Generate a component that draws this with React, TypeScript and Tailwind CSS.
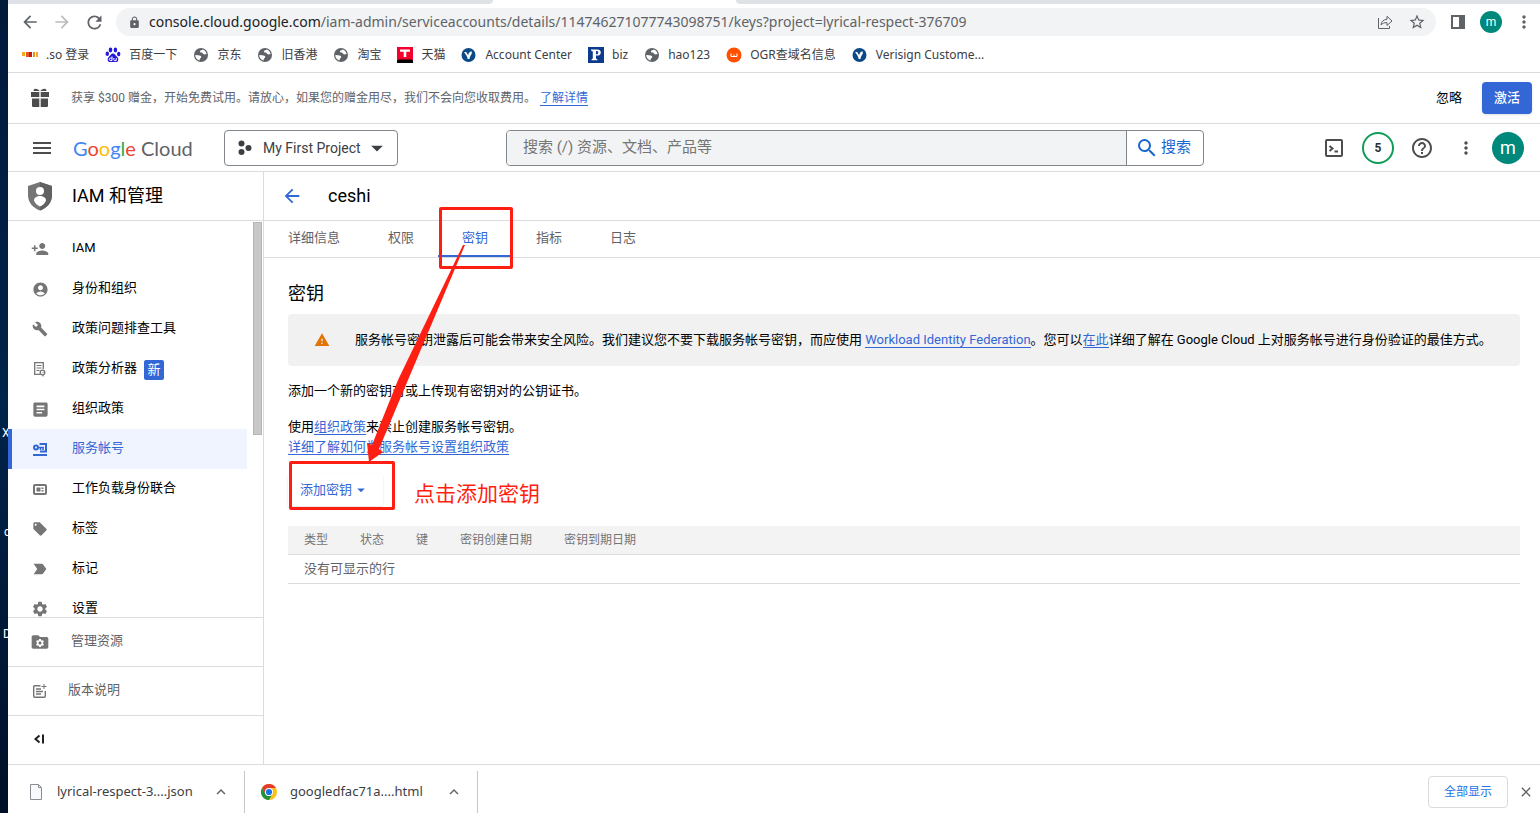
import type { ReactNode } from "react";
import {
  MdAccountCircle,
  MdArrowBack,
  MdArrowDropDown,
  MdArrowForward,
  MdArticle,
  MdBuild,
  MdClose,
  MdFolder,
  MdHelpOutline,
  MdKeyboardArrowUp,
  MdLabelImportant,
  MdLocalOffer,
  MdLock,
  MdMenu,
  MdMoreVert,
  MdPersonAdd,
  MdRefresh,
  MdSearch,
  MdSettings,
  MdStarOutline,
  MdWarning,
} from "react-icons/md";

function GlobeIcon() {
  return (
    <svg width="16" height="16" viewBox="0 0 16 16">
      <circle cx="8" cy="8" r="7" fill="#5f6368" />
      <path
        d="M2.300 8C4 7.800 5.200 8.400 6.500 8.500c1.300.1 2 .9 1.600 1.900-.4.900-1.300.8-1.400 1.700l-.1 1.500C4 13 2.200 10.700 2.300 8zM9.500 2.500c-.2.900-2 .6-2.500 1.600-.5 1.200.6 1.500 1.700 1.500 1.200 0 .9 1.300 2 1.700 1 .3 2 .1 2.900-.3-.4-2.300-2-4-4.100-4.500z"
        fill="#fff"
      />
    </svg>
  );
}

function SoIcon() {
  return (
    <svg width="16" height="16" viewBox="0 0 16 16">
      <rect x="0" y="5" width="3" height="4" fill="#f5a623" />
      <rect x="4" y="5" width="3" height="5" fill="#e2581d" />
      <rect x="7" y="5" width="3" height="5" fill="#c21a1a" />
      <rect x="11" y="5" width="2" height="5" fill="#f08a1d" />
      <rect x="14" y="5" width="2" height="5" fill="#f5a623" />
    </svg>
  );
}

function PawIcon() {
  return (
    <svg width="16" height="16" viewBox="0 0 16 16" fill="#2319dc">
      <ellipse cx="5.500" cy="3" rx="1.800" ry="2.400" />
      <ellipse cx="10.400" cy="3" rx="1.800" ry="2.400" />
      <ellipse cx="2.300" cy="6.800" rx="1.700" ry="2.200" />
      <ellipse cx="13.700" cy="7" rx="1.700" ry="2.200" />
      <path d="M8 6.500c2 0 2.600 2 4 3.200 2 1.700 1.700 5.300-1 5.300H5c-2.700 0-3-3.600-1-5.300C5.400 8.500 6 6.500 8 6.500z" />
      <path d="M7 9.500v4H5.200c-1.200 0-1.200-2.400 0-2.400H7M8.800 11v1.700c0 .8.500.9 1 .9h1.400V11" fill="none" stroke="#fff" />
    </svg>
  );
}

function TmallIcon() {
  return (
    <svg width="16" height="16" viewBox="0 0 16 16">
      <rect width="16" height="16" fill="#f5002d" />
      <path d="M3 2.500h10v2.200H9.300V10H6.700V4.700H3z" fill="#fff" />
      <path d="M0 16v-2.500C1.500 12 3 12.600 4.500 12.600h7c1.500 0 3-.6 4.500.9V16z" fill="#000" />
    </svg>
  );
}

function VerisignIcon() {
  return (
    <svg width="16" height="16" viewBox="0 0 16 16">
      <circle cx="7.500" cy="8" r="7" fill="#0b4a86" />
      <path d="M3 5.500l2-.8 2.200 3.600c.2-1.600 1-3.500 3.600-4-.6.8.4 1.500 0 2.300C10 8 8.700 9.800 8.500 12H6.600c0-2-1.800-5-3.600-6.500z" fill="#fff" />
    </svg>
  );
}

function BizIcon() {
  return (
    <svg width="16" height="16" viewBox="0 0 16 16">
      <rect width="16" height="16" fill="#0c3a8c" />
      <path d="M3 2.500h6.500c2 0 3.300 1 3.300 2.900S11.500 8.600 9.500 8.600H8v3l1.400.8v.8H3.500v-.8l1.300-.8v-7L3 3.500zM8 4v3.300h1c1.600 0 1.600-3.300 0-3.300z" fill="#fff" fillRule="evenodd" />
    </svg>
  );
}

function OgrIcon() {
  return (
    <svg width="16" height="16" viewBox="0 0 16 16">
      <circle cx="8" cy="8" r="7.500" fill="#fe5000" />
      <path d="M5 6.500v3h6v-3M8 7.500v2" fill="none" stroke="#fff" />
    </svg>
  );
}

function ChromeIcon() {
  return (
    <svg width="16" height="16" viewBox="0 0 16 16">
      <circle cx="8" cy="8" r="8" fill="#fbc116" />
      <path d="M8 0a8 8 0 0 1 6.930 4H8a4 4 0 0 0-3.460 6L1.070 4A8 8 0 0 1 8 0z" fill="#e33b2e" />
      <path d="M1.070 4l3.470 6A4 4 0 0 0 11.460 10L8 16A8 8 0 0 1 1.070 4z" fill="#229342" />
      <circle cx="8" cy="8" r="4" fill="#fff" />
      <circle cx="8" cy="8" r="3.100" fill="#1a73e8" />
    </svg>
  );
}

function FileIcon() {
  return (
    <svg width="16" height="18" viewBox="0 0 16 18">
      <path d="M2.500 1.500h8l3 3v12h-11z" fill="#f8f9fa" stroke="#8a8d91" />
      <path d="M10.500 1.500v3h3" fill="none" stroke="#8a8d91" />
    </svg>
  );
}

function GiftIcon() {
  return (
    <svg width="20" height="20" viewBox="0 0 20 20" fill="#4d4d4d">
      <path d="M10 3.500C8.500.5 5 .2 4 1.200L3.500 3H10zM10 3.500C11.500.5 15 .2 16 1.200l.5 1.800H10z" />
      <path d="M1 4h8.300v5H1zM10.700 4H19v5h-8.300zM2 10.500h7.300V19H3a1 1 0 0 1-1-1zM10.700 10.500H18V18a1 1 0 0 1-1 1h-6.300z" />
    </svg>
  );
}

function ShareIcon() {
  return (
    <svg width="18" height="18" viewBox="0 0 18 18" fill="none" stroke="#5f6368">
      <path d="M2.500 5v10.500h11V13" />
      <path d="M5 12c.4-3.600 2.600-5.500 6-5.700V3.300L16 8l-5 4.500V9.600C8.300 9.500 6.500 10.300 5 12z" />
    </svg>
  );
}

function SidePanelIcon() {
  return (
    <svg width="16" height="16" viewBox="0 0 16 16">
      <path d="M1 1h14v14H1zM3 3v10h6V3z" fill="#5f6368" fillRule="evenodd" />
    </svg>
  );
}

function ShieldIcon() {
  return (
    <svg width="26" height="30" viewBox="0 0 26 30">
      <path d="M13 1l12 4v9c0 7.500-5 13-12 15.500C6 27 1 21.500 1 14V5z" fill="#757575" />
      <path d="M13 1l12 4v9c0 7.500-5 13-12 15.500z" fill="#616161" />
      <circle cx="13" cy="10" r="4" fill="#fff" />
      <path d="M7 19.500c0-3 3-4.500 6-4.500s6 1.500 6 4.500c-1 3-3.400 5-6 6-2.600-1-5-3-6-6z" fill="#fff" />
    </svg>
  );
}

function PolicyAnalyzerIcon() {
  return (
    <svg width="16" height="16" viewBox="0 0 16 16" fill="none" stroke="#757575">
      <path d="M8 13.300H2.700V1.700h8.600V8" strokeWidth="1.300" />
      <path d="M4.500 4.500h5M4.500 7h5M4.500 9.500h3" />
      <circle cx="10.500" cy="11.500" r="2.300" strokeWidth="1.300" />
      <path d="M10.500 11.500h1M11 14v1.500" />
    </svg>
  );
}

function ServiceAccountIcon() {
  return (
    <svg width="16" height="16" viewBox="0 0 16 16" fill="none" stroke="#3367d6" strokeWidth="2">
      <circle cx="4" cy="6.500" r="2" />
      <path d="M6 6.500h6M8.500 7v2M11 7v2" strokeWidth="1.500" />
      <path d="M7.500 3H14v7.500H8M1 14h14" />
    </svg>
  );
}

function WorkloadIcon() {
  return (
    <svg width="16" height="16" viewBox="0 0 16 16">
      <rect x="2" y="4" width="12" height="9" rx="1" fill="none" stroke="#757575" strokeWidth="2" />
      <path d="M4.500 6.500h4v4h-4zM9.500 6.500h2v1.500h-2zM9.500 9h2v1.500h-2z" fill="#757575" />
    </svg>
  );
}

function ManageResourcesIcon() {
  return (
    <span className="relative flex text-[#757575]">
      <MdFolder size={20} />
      <MdSettings size={10} className="absolute top-[6px] left-[5px] text-white" />
    </span>
  );
}

function ReleaseNotesIcon() {
  return (
    <svg width="16" height="16" viewBox="0 0 16 16" fill="none" stroke="#757575">
      <path d="M8.500 2.700H2.700a1 1 0 0 0-1 1v9.600a1 1 0 0 0 1 1h9.600a1 1 0 0 0 1-1V8" strokeWidth="1.400" />
      <path d="M4 6h5M4 8.500h7M4 11h5" strokeWidth="1.300" />
      <path d="M12 1v5M9.500 3.500h5" />
    </svg>
  );
}

function CloudShellIcon() {
  return (
    <svg width="20" height="20" viewBox="0 0 20 20" fill="none" stroke="#4d4d4d" strokeWidth="2">
      <rect x="2" y="2" width="16" height="16" rx="1" />
      <path d="M5.500 8l3 2.500-3 2.500M10.500 13.500H14" />
    </svg>
  );
}

function ProjectIcon() {
  return (
    <svg width="16" height="16" viewBox="0 0 16 16" fill="#3c4043">
      <circle cx="4.500" cy="3.500" r="3" />
      <circle cx="4.500" cy="12" r="3" />
      <circle cx="11.500" cy="8" r="3" />
    </svg>
  );
}

interface Bookmark {
  label: string;
  icon: ReactNode;
}

const bookmarks: Bookmark[] = [
  { label: ".so 登录", icon: <SoIcon /> },
  { label: "百度一下", icon: <PawIcon /> },
  { label: "京东", icon: <GlobeIcon /> },
  { label: "旧香港", icon: <GlobeIcon /> },
  { label: "淘宝", icon: <GlobeIcon /> },
  { label: "天猫", icon: <TmallIcon /> },
  { label: "Account Center", icon: <VerisignIcon /> },
  { label: "biz", icon: <BizIcon /> },
  { label: "hao123", icon: <GlobeIcon /> },
  { label: "OGR查域名信息", icon: <OgrIcon /> },
  { label: "Verisign Custome...", icon: <VerisignIcon /> },
];

interface NavItem {
  label: string;
  icon: ReactNode;
  badge?: string;
  active?: boolean;
}

const navItems: NavItem[] = [
  { label: "IAM", icon: <MdPersonAdd size={18} /> },
  { label: "身份和组织", icon: <MdAccountCircle size={17} /> },
  { label: "政策问题排查工具", icon: <MdBuild size={16} /> },
  { label: "政策分析器", icon: <PolicyAnalyzerIcon />, badge: "新" },
  { label: "组织政策", icon: <MdArticle size={19} /> },
  { label: "服务帐号", icon: <ServiceAccountIcon />, active: true },
  { label: "工作负载身份联合", icon: <WorkloadIcon /> },
  { label: "标签", icon: <MdLocalOffer size={16} /> },
  { label: "标记", icon: <MdLabelImportant size={18} /> },
  { label: "设置", icon: <MdSettings size={18} /> },
];

const tabs = ["详细信息", "权限", "密钥", "指标", "日志"];
const columns = ["类型", "状态", "键", "密钥创建日期", "密钥到期日期"];

function BrowserBar() {
  return (
    <div className="shrink-0 font-['Noto_Sans','Noto_Sans_CJK_SC',sans-serif]">
      <div className="flex h-1 bg-white">
        <div className="w-[485px] rounded-br-md bg-[#dee1e6]" />
        <div className="ml-[243px] flex-1 rounded-bl-md bg-[#dee1e6]" />
      </div>
      <div className="flex h-9 items-center pr-1.5 text-[#5f6368]">
        <div className="flex w-[108px] items-center gap-3 pl-3">
          <button type="button" aria-label="后退"><MdArrowBack size={20} /></button>
          <button type="button" aria-label="前进" className="text-[#babcbe]"><MdArrowForward size={20} /></button>
          <button type="button" aria-label="重新加载"><MdRefresh size={21} /></button>
        </div>
        <div className="flex h-7 min-w-0 flex-1 items-center rounded-full bg-[#f1f3f4] pr-2.5 pl-3">
          <MdLock size={13} className="shrink-0" />
          <p className="ml-2 flex-1 truncate text-sm">
            <span className="text-[#202124]">console.cloud.google.com</span>
            /iam-admin/serviceaccounts/details/114746271077743098751/keys?project=lyrical-respect-376709
          </p>
          <button type="button" aria-label="分享" className="mr-3.5"><ShareIcon /></button>
          <button type="button" aria-label="收藏"><MdStarOutline size={18} /></button>
        </div>
        <div className="ml-3 flex items-center gap-3">
          <button type="button" aria-label="侧边栏" className="px-0.5"><SidePanelIcon /></button>
          <span className="flex size-[22px] items-center justify-center rounded-full bg-[#00897b] font-[Roboto,sans-serif] text-xs text-white">m</span>
          <button type="button" aria-label="菜单"><MdMoreVert size={20} /></button>
        </div>
      </div>
      <nav className="flex h-8 items-center gap-4 overflow-hidden pb-0.5 pl-[14px] text-xs text-[#3c4043]">
        {bookmarks.map((item) => (
          <a key={item.label} href="#" className="flex shrink-0 items-center gap-2 leading-4">
            {item.icon}
            {item.label}
          </a>
        ))}
      </nav>
    </div>
  );
}

function PromoBar() {
  return (
    <div className="flex h-[52px] shrink-0 items-center border-y border-[#dadce0] pr-2 pl-[22px] text-xs text-[#5f6368]">
      <GiftIcon />
      <p className="ml-[21px] flex-1">
        获享 $300 赠金，开始免费试用。请放心，如果您的赠金用尽，我们不会向您收取费用。
        <a href="#" className="ml-1 border-b border-[#3367d6] text-[#3367d6]">了解详情</a>
      </p>
      <button type="button" className="mr-5 text-[13px] text-black">忽略</button>
      <button type="button" className="h-8 rounded-sm bg-[#3367d6] px-3 text-[13px] font-medium text-white shadow">
        激活
      </button>
    </div>
  );
}

function GoogleCloudLogo() {
  return (
    <a href="#" className="ml-[19px] w-[151px] font-[Lato,sans-serif] text-xl leading-6 whitespace-nowrap text-[#5f6368]">
      <span className="text-[#4285f4]">G</span>
      <span className="text-[#ea4335]">o</span>
      <span className="text-[#fbbc04]">o</span>
      <span className="text-[#4285f4]">g</span>
      <span className="text-[#34a853]">l</span>
      <span className="text-[#ea4335]">e</span> Cloud
    </a>
  );
}

function Header() {
  return (
    <header className="flex h-12 shrink-0 items-center border-b border-[#dadce0] pr-4 pl-[22px] text-[#4d4d4d]">
      <button type="button" aria-label="导航菜单"><MdMenu size={24} /></button>
      <GoogleCloudLogo />
      <button type="button" className="flex h-9 w-[174px] shrink-0 items-center rounded-sm border border-[#80868b] pl-3 text-sm text-[#3c4043]">
        <ProjectIcon />
        <span className="ml-2.5">My First Project</span>
        <MdArrowDropDown size={28} className="ml-0.5" />
      </button>
      <form className="mr-6 ml-[108px] flex h-9 w-[698px] overflow-hidden rounded-sm border border-[#80868b]">
        <input
          type="text"
          aria-label="搜索"
          placeholder="搜索 (/) 资源、文档、产品等"
          className="min-w-0 flex-1 bg-[#f1f3f4] px-4 text-[15px] placeholder:text-[#757575]"
        />
        <button type="button" className="flex w-[77px] items-center gap-0.5 border-l border-[#80868b] pl-2 text-[15px] text-[#1967d2]">
          <MdSearch size={24} />
          搜索
        </button>
      </form>
      <div className="ml-auto flex items-center gap-3">
        <button type="button" aria-label="Cloud Shell" className="flex size-8 items-center justify-center"><CloudShellIcon /></button>
        <button type="button" aria-label="通知" className="size-8 rounded-full border-2 border-[#0f9d58] text-xs font-bold text-[#263238]">5</button>
        <button type="button" aria-label="帮助" className="flex size-8 items-center justify-center"><MdHelpOutline size={24} /></button>
        <button type="button" aria-label="更多" className="flex size-8 items-center justify-center"><MdMoreVert size={20} /></button>
        <span className="-ml-0.5 flex size-8 items-center justify-center rounded-full bg-[#00897b] text-lg text-white">m</span>
      </div>
    </header>
  );
}

function Sidebar() {
  return (
    <aside className="flex w-64 shrink-0 flex-col border-r border-[#dadce0]">
      <div className="flex h-[49px] shrink-0 items-center border-b border-[#dadce0] pl-[19px]">
        <ShieldIcon />
        <h2 className="ml-[19px] text-lg text-black">IAM 和管理</h2>
      </div>
      <div className="flex min-h-0 flex-1 overflow-hidden">
        <nav className="flex-1 pt-2">
          {navItems.map((item) => (
            <a
              key={item.label}
              href="#"
              className={
                item.active
                  ? "flex h-10 items-center border-l-4 border-[#3367d6] bg-[#eff4ff] pl-4 text-[13px] text-[#3367d6]"
                  : "flex h-10 items-center pl-5 text-[13px] text-black"
              }
            >
              <span className={item.active ? "flex w-6 justify-center" : "flex w-6 justify-center text-[#757575]"}>
                {item.icon}
              </span>
              <span className="ml-5 pb-0.5">{item.label}</span>
              {item.badge && (
                <span className="mt-0.5 ml-[7px] flex size-5 items-center justify-center rounded-xs bg-[#3367d6] text-[13px] text-white">
                  {item.badge}
                </span>
              )}
            </a>
          ))}
        </nav>
        <div className="mt-px mr-px ml-1.5 h-[213px] w-[9px] border border-[#b5b5b5] bg-[#c8c8c8]" />
      </div>
      <div className="shrink-0 text-[13px] text-[#5f6368]">
        <a href="#" className="flex h-[49px] items-center border-t border-[#dadce0] pl-[22px]">
          <ManageResourcesIcon />
          <span className="ml-[21px] pb-0.5">管理资源</span>
        </a>
        <a href="#" className="flex h-[49px] items-center border-t border-[#dadce0] pl-6">
          <ReleaseNotesIcon />
          <span className="ml-5 pb-0.5">版本说明</span>
        </a>
        <div className="flex h-[49px] items-center border-t border-[#dadce0] pl-6">
          <button type="button" aria-label="收起菜单">
            <svg width="16" height="16" viewBox="0 0 16 16" fill="none" stroke="#212121" strokeWidth="2">
              <path d="M7.500 3.500L3.500 7l4 3.500M11 2.500v9" />
            </svg>
          </button>
        </div>
      </div>
    </aside>
  );
}

function KeysPage() {
  return (
    <main className="relative min-w-0 flex-1 text-[13px] leading-5 text-black">
      <div className="flex h-[49px] items-center border-b border-[#dadce0] pl-[17px]">
        <button type="button" aria-label="返回" className="text-[#3367d6]"><MdArrowBack size={22} /></button>
        <h1 className="ml-[25px] text-lg">ceshi</h1>
      </div>
      <div role="tablist" className="flex h-[37px] border-b border-[#dadce0] text-[#5f6368]">
        {tabs.map((tab) =>
          tab === "密钥" ? (
            <button
              key={tab}
              type="button"
              role="tab"
              aria-selected
              className="relative border-b-2 border-[#3367d6] px-6 text-[#3367d6]"
            >
              {tab}
              <span className="absolute -top-[14px] left-px h-[62px] w-[74px] rounded-xs border-3 border-[#ff1f12]" />
            </button>
          ) : (
            <button key={tab} type="button" role="tab" aria-selected={false} className="border-b-2 border-transparent px-6">
              {tab}
            </button>
          ),
        )}
      </div>
      <div className="pt-6 pr-5 pl-6">
        <h2 className="text-lg leading-6">密钥</h2>
        <div className="mt-2 flex min-h-[52px] items-center rounded-sm bg-[#f1f1f1] pr-4 pl-[26px]">
          <MdWarning size={16} className="shrink-0 text-[#e37400]" />
          <p className="ml-[25px]">
            服务帐号密钥泄露后可能会带来安全风险。我们建议您不要下载服务帐号密钥，而应使用{" "}
            <a href="#" className="border-b border-[#3367d6] text-[#3367d6]">Workload Identity Federation</a>
            。您可以
            <a href="#" className="border-b border-[#3367d6] text-[#3367d6]">在此</a>
            详细了解在 Google Cloud 上对服务帐号进行身份验证的最佳方式。
          </p>
        </div>
        <p className="mt-[15px]">添加一个新的密钥对或上传现有密钥对的公钥证书。</p>
        <p className="mt-4">
          使用
          <a href="#" className="border-b border-[#3367d6] text-[#3367d6]">组织政策</a>
          来禁止创建服务帐号密钥。
          <br />
          <a href="#" className="border-b border-[#3367d6] text-[#3367d6]">详细了解如何为服务帐号设置组织政策</a>
        </p>
        <div className="mt-[17px] flex items-center">
          <div className="relative">
            <button type="button" className="flex h-8 w-[95px] items-center rounded-xs bg-white pl-3 text-[#3367d6] shadow">
              添加密钥
              <MdArrowDropDown size={18} />
            </button>
            <span className="absolute -top-[13px] left-px h-[49px] w-[106px] rounded-xs border-3 border-[#ff1f12]" />
          </div>
          <span className="ml-[31px] pt-2 text-[21px] text-[#ff1f12]">点击添加密钥</span>
        </div>
        <table className="mt-5 w-full text-left text-[#757575]">
          <thead>
            <tr className="h-7 border-b border-[#dadce0] bg-[#f3f3f3] text-xs">
              {columns.map((column) => (
                <th key={column} className="px-4 font-normal whitespace-nowrap">{column}</th>
              ))}
              <th className="w-full" />
            </tr>
          </thead>
          <tbody>
            <tr className="h-[29px] border-b border-[#dadce0] text-[#5f6368]">
              <td colSpan={6} className="px-4">没有可显示的行</td>
            </tr>
          </tbody>
        </table>
      </div>
      <svg width="150" height="220" viewBox="0 0 150 220" className="pointer-events-none absolute top-[73px] left-[90px]">
        <path d="M109 0L44 135 18 200 13 198 15 217 29 207 25 204 54 135 111 0z" fill="#ff1f12" />
      </svg>
    </main>
  );
}

function DownloadBar() {
  return (
    <footer className="flex h-[49px] shrink-0 items-center border-t border-[#dadce0] pr-1.5 font-['Noto_Sans','Noto_Sans_CJK_SC',sans-serif] text-[13px] text-[#3c4043]">
      <div className="mt-1.5 flex h-[42px] w-[237px] items-center border-r border-[#c4c7ca] pl-5">
        <FileIcon />
        <span className="ml-[13px] flex-1">lyrical-respect-3....json</span>
        <button type="button" aria-label="更多" className="mr-3.5 text-[#5f6368]"><MdKeyboardArrowUp size={18} /></button>
      </div>
      <div className="mt-1.5 flex h-[42px] w-[233px] items-center border-r border-[#c4c7ca] pl-4">
        <ChromeIcon />
        <span className="ml-[13px] flex-1">googledfac71a....html</span>
        <button type="button" aria-label="更多" className="mr-3.5 text-[#5f6368]"><MdKeyboardArrowUp size={18} /></button>
      </div>
      <button type="button" className="mt-1.5 ml-auto h-8 w-20 rounded-sm border border-[#dadce0] text-xs text-[#1a73e8]">全部显示</button>
      <button type="button" aria-label="关闭" className="mt-1.5 ml-2.5 text-[#5f6368]"><MdClose size={16} /></button>
    </footer>
  );
}

export default function App() {
  return (
    <div className="flex h-screen overflow-hidden bg-white font-[Roboto,'Noto_Sans_CJK_SC',sans-serif]">
      {/* desktop peeking out behind the browser window */}
      <div className="relative w-2 shrink-0 overflow-hidden bg-linear-to-b from-[#001a3a] via-[#00244a] to-[#000f28] text-xs leading-4 text-white">
        <span className="absolute top-[425px] left-0.5">X</span>
        <span className="absolute top-[524px] left-1">c</span>
        <span className="absolute top-[626px] left-[3px]">D</span>
      </div>
      <div className="flex min-w-0 flex-1 flex-col">
        <BrowserBar />
        <PromoBar />
        <Header />
        <div className="flex min-h-0 flex-1">
          <Sidebar />
          <KeysPage />
        </div>
        <DownloadBar />
      </div>
    </div>
  );
}
